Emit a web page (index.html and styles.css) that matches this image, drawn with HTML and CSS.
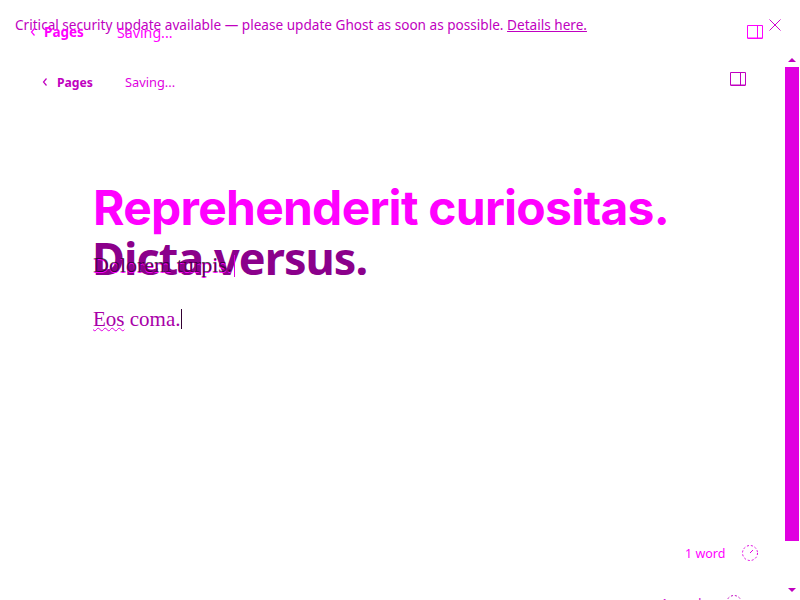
FILE: index.html
```html
<!DOCTYPE html>
<html lang="en">
<head>
<meta charset="utf-8">
<title>Editor</title>
<link rel="stylesheet" href="styles.css">
</head>
<body>
<div class="page">
  <section class="layer under">
    <p class="banner">Critical security update available — please update Ghost as soon as possible. <a href="#">Details here.</a></p>
    <div class="topbar light">
      <span class="crumb"><svg class="chev" viewBox="0 0 6 8"><path d="M4.500 .5 1.500 4l3 3.500"/></svg><b>Pages</b></span>
      <span class="saving">Saving...</span>
      <svg class="panel" viewBox="0 0 16 14"><path d="M.5 .5h15v12.500H.5zM10.500 .5v12.500M.5 13.500h15"/></svg>
    </div>
    <svg class="close" viewBox="0 0 12 12"><path d="M.5 .5l11 11M11.500 .5l-11 11"/></svg>
    <div class="status lower"><span>1 word</span><svg class="ring" viewBox="0 0 18 18"><circle cx="9" cy="9" r="7.500"/></svg></div>
  </section>
  <main class="layer editor">
    <div class="topbar">
      <span class="crumb"><svg class="chev" viewBox="0 0 6 8"><path d="M4.500 .5 1.500 4l3 3.500"/></svg><b>Pages</b></span>
      <span class="saving">Saving...</span>
      <svg class="panel" viewBox="0 0 16 14"><path d="M.5 .5h15v12.500H.5zM10.500 .5v12.500M.5 13.500h15"/></svg>
    </div>
    <h1 class="title"><span class="first">Reprehenderit curiositas.</span><span class="second">Dicta versus.</span></h1>
    <p class="ghost-body tint">Dolorem turpis.<span class="caret"></span></p>
    <p class="ghost-body dark">Dolorem turpis.</p>
    <p class="body"><span class="spell">Eos</span> coma.<span class="caret"></span></p>
    <div class="status"><span>1 word</span><svg class="ring" viewBox="0 0 18 18"><circle cx="9" cy="9" r="7.500"/><path class="hand" d="M9 9l3-3"/></svg></div>
  </main>
  <div class="scrollbar"><i class="up"></i><i class="thumb"></i><i class="down"></i></div>
</div>
</body>
</html>
```
FILE: styles.css
```css
html, body { margin: 0; padding: 0; background: #fff; overflow: hidden; }
.page { position: relative; width: 800px; height: 600px; overflow: hidden; font-family: "Noto Sans", sans-serif; color: #e000e0; }
.layer { position: absolute; inset: 0; }
p { margin: 0; }
.banner { position: absolute; left: 15px; top: 15px; font-size: 13.6px; line-height: 19px; color: #c000c0; white-space: nowrap; }
.banner a { color: inherit; }
.topbar { position: absolute; left: 42px; top: 73px; width: 704px; height: 18px; display: flex; align-items: center; color: #c000c0; font-size: 12.200px; }
.topbar.light { left: 30px; top: 23px; width: 733px; color: #ff00ff; font-size: 13.500px; }
.crumb { display: flex; align-items: center; gap: 9px; width: 83px; flex: none; }
.light .crumb { width: 87px; gap: 8px; }
.chev { width: 6px; height: 8px; fill: none; stroke: currentColor; stroke-width: 1.200; flex: none; }
.saving { font-size: 12.800px; color: #e000e0; }
.light .saving { font-size: 14.200px; color: #ff00ff; }
.panel { width: 16px; height: 14px; margin-left: auto; margin-bottom: 6px; fill: none; stroke: currentColor; stroke-width: 1; }
.light .panel { margin-bottom: 0; }
.close { position: absolute; left: 769px; top: 19px; width: 12px; height: 12px; fill: none; stroke: #d000d0; stroke-width: 1; }
.title { position: absolute; left: 93px; top: 183px; margin: 0; white-space: nowrap; display: flex; flex-direction: column; }
.first { font: 700 48px/50px Inter, sans-serif; letter-spacing: -0.75px; color: #ff00ff; }
.second { font: 700 45px/49px "Noto Sans", sans-serif; letter-spacing: -0.950px; margin-left: -1px; color: #8b008b; }
.ghost-body { position: absolute; left: 93px; top: 252px; font: 22px/26px "Liberation Serif", serif; display: flex; white-space: pre; }
.dark { color: #202; opacity: .75; }
.tint { top: 253px; color: #ff00ff; }
.tint .caret { background: #e000e0; height: 22px; margin-top: 2px; margin-left: 2px; }
.body { position: absolute; left: 93px; top: 305px; font: 21px/28px "Liberation Serif", serif; color: #a800a8; display: flex; white-space: pre; }
.spell { text-decoration: underline wavy #e000e0 1px; }
.caret { width: 1px; height: 20px; margin-top: 4px; margin-left: 1px; background: #303; }
.status { position: absolute; left: 685px; top: 544px; display: flex; align-items: center; gap: 16px; font-size: 12.500px; color: #ff00ff; }
.status.lower { left: 661px; top: 594px; gap: 24px; color: #d000d0; }
.ring { width: 18px; height: 18px; fill: none; stroke: #e000e0; stroke-width: 1; stroke-dasharray: 2 2; }
.lower .ring { stroke: #c000c0; }
.hand { stroke-dasharray: none; }
.scrollbar { position: absolute; right: 1px; top: 58px; width: 14px; display: flex; flex-direction: column; align-items: center; }
.thumb { width: 14px; height: 474px; background: #e000e0; margin-top: 5px; }
.up, .down { width: 0; height: 0; border: 4px solid transparent; }
.up { border-bottom-color: #c000c0; border-top: 0; }
.down { border-top-color: #c000c0; border-bottom: 0; margin-top: 47px; }
```
